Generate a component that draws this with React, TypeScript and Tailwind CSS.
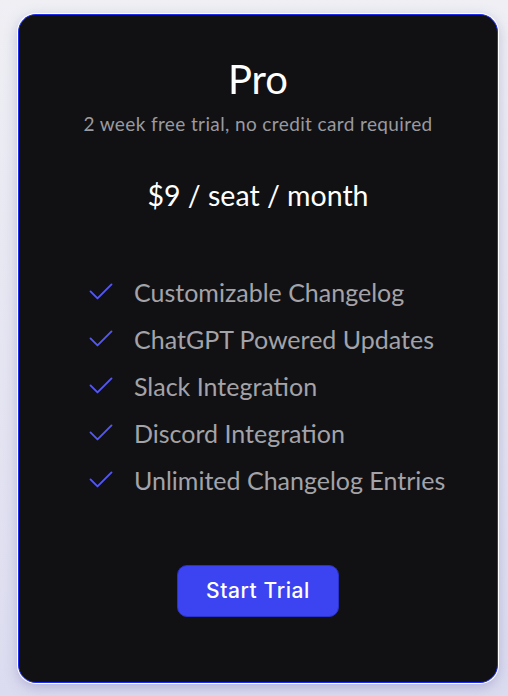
import React from "react";

const features = [
  "Customizable Changelog",
  "ChatGPT Powered Updates",
  "Slack Integration",
  "Discord Integration",
  "Unlimited Changelog Entries",
];

function CheckIcon() {
  return (
    <svg width="28" height="28" viewBox="0 0 24 24" fill="none" stroke="#5457f5" strokeWidth="1.6" strokeLinecap="round" strokeLinejoin="round">
      <path d="M21 5.5 9 17.5l-6-6" />
    </svg>
  );
}

export default function App() {
  return (
    <div
      className="w-[508px] h-[696px] bg-gradient-to-b from-[#efeff4] to-[#dcdcf0] pl-[18px] pr-[10px] pt-[14px] pb-[13px]"
      style={{ fontFamily: "Lato, 'Open Sans', sans-serif" }}
    >
      <div className="h-full rounded-[18px] border-[1.5px] border-[#1f2fee] bg-[#111113] shadow-[0_0_0_1px_#ffffff,0_4px_14px_rgba(90,90,160,0.35)] flex flex-col items-center pt-[40px]">
        <h1 className="text-[40px] leading-[48px] text-white">Pro</h1>
        <p className="mt-[9px] text-[19px] leading-[24px] tracking-[0.38px] text-[#9a9aa0]">2 week free trial, no credit card required</p>
        <p className="mt-[42px] text-[28.5px] leading-[34px] text-white">$9 / seat / month</p>
        <ul className="mt-[66px] flex flex-col gap-[19px] self-start pl-[68px]">
          {features.map((f) => (
            <li key={f} className="flex items-center gap-[19px] h-[28px]">
              <CheckIcon />
              <span className="text-[25px] leading-[28px] text-[#a3a3a9]">{f}</span>
            </li>
          ))}
        </ul>
        <button
          className="mt-[71px] w-[162px] h-[52px] rounded-[10px] bg-[#3b44f0] text-white text-[21px] tracking-[0.6px] border border-[#2b32c8]"
          style={{ fontFamily: "Inter, 'Open Sans', sans-serif", fontWeight: 500 }}
        >
          Start Trial
        </button>
      </div>
    </div>
  );
}
